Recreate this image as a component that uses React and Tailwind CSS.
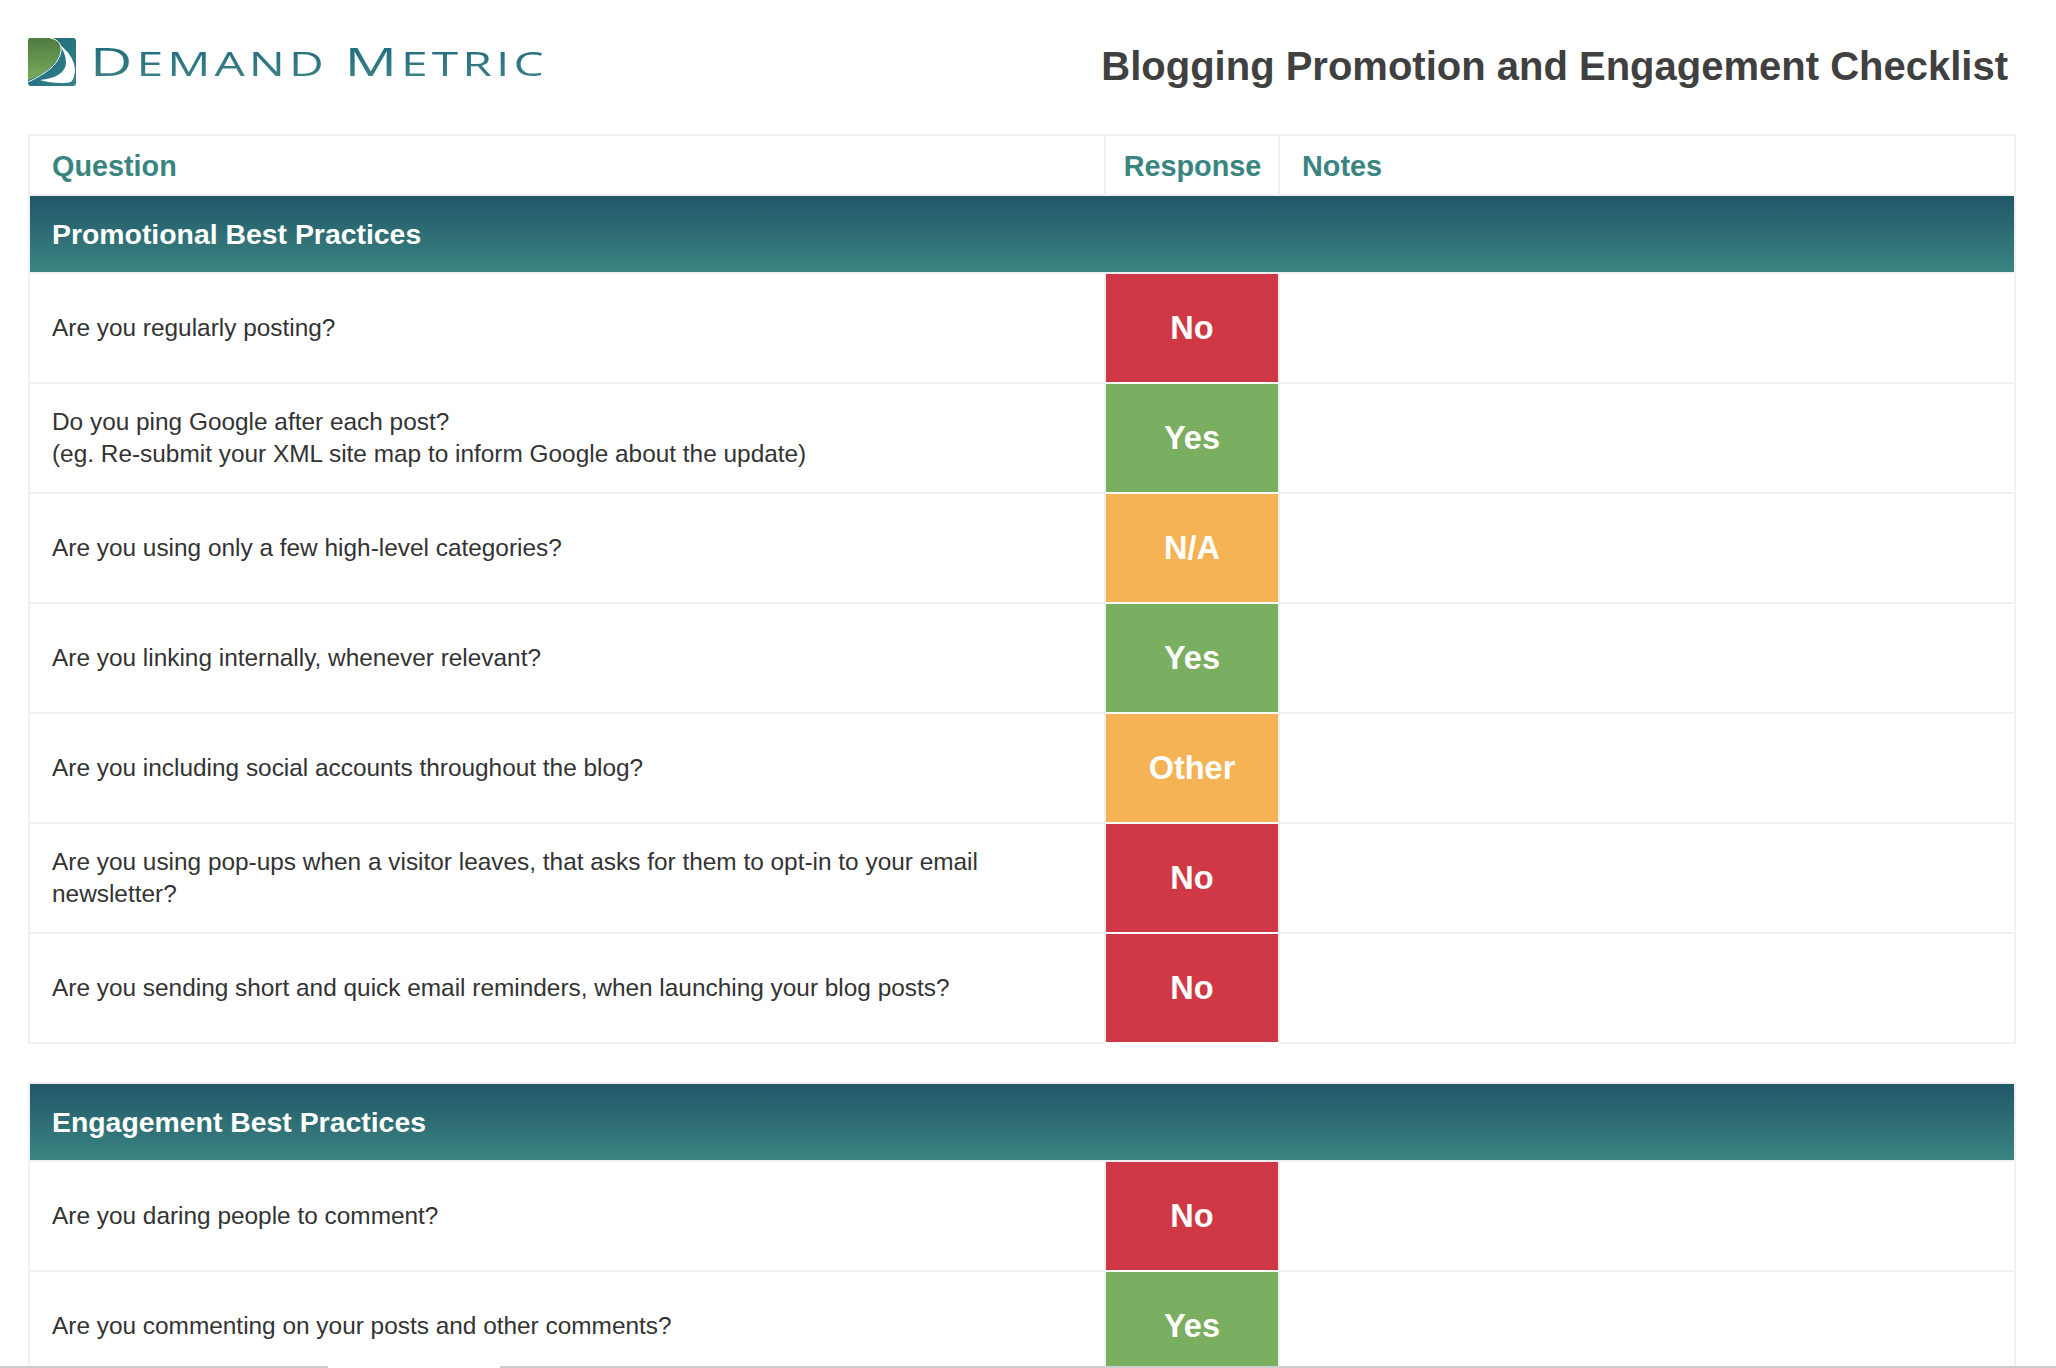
import React from 'react';

const sections = [
  {
    title: 'Promotional Best Practices',
    rows: [
      { q: ['Are you regularly posting?'], r: 'No' },
      { q: ['Do you ping Google after each post?', '(eg. Re-submit your XML site map to inform Google about the update)'], r: 'Yes' },
      { q: ['Are you using only a few high-level categories?'], r: 'N/A' },
      { q: ['Are you linking internally, whenever relevant?'], r: 'Yes' },
      { q: ['Are you including social accounts throughout the blog?'], r: 'Other' },
      { q: ['Are you using pop-ups when a visitor leaves, that asks for them to opt-in to your email newsletter?'], r: 'No' },
      { q: ['Are you sending short and quick email reminders, when launching your blog posts?'], r: 'No' },
    ],
  },
  {
    title: 'Engagement Best Practices',
    rows: [
      { q: ['Are you daring people to comment?'], r: 'No' },
      { q: ['Are you commenting on your posts and other comments?'], r: 'Yes' },
    ],
  },
];

const responseColors = {
  No: 'bg-[#cf3844]',
  Yes: 'bg-[#7aae60]',
  'N/A': 'bg-[#f6b355]',
  Other: 'bg-[#f6b355]',
};

const Logo = () => (
  <svg width="48" height="48" viewBox="0 0 48 48" className="shrink-0">
    <defs>
      <linearGradient id="logoGreen" x1="0" y1="0" x2="0" y2="1">
        <stop offset="0" stopColor="#4f7c42" />
        <stop offset="1" stopColor="#78ad5c" />
      </linearGradient>
      <linearGradient id="logoTeal" x1="0" y1="0" x2="1" y2="1">
        <stop offset="0" stopColor="#1b6478" />
        <stop offset="1" stopColor="#34848a" />
      </linearGradient>
    </defs>
    <rect width="48" height="48" rx="3" fill="url(#logoTeal)" />
    <path d="M0 3a3 3 0 0 1 3-3h22c4 1 7 4 8 8 0 8-4 15-10 21-6 5-14 10-23 13z" fill="url(#logoGreen)" />
    <path d="M32 7c8 6 14 14 15 24 0 5-1 10-4 13-8 2-22 1-31-2 7-1 13-2 18-5 5-3 8-8 8-12 0-7-3-13-6-18z" fill="#fff" />
    <path d="M22 0c6 1 10 4 11 9 1 7-4 16-10 21-6 5-14 10-23 14" fill="none" stroke="#fff" strokeWidth="1" />
  </svg>
);

const SectionHeader = ({ title }) => (
  <div className="flex h-[76px] items-center bg-linear-to-b/srgb from-[#215768] to-[#3b8481] pl-[22px] text-[28.4px] font-bold text-white">
    {title}
  </div>
);

const Row = ({ row }) => (
  <div className="flex h-[110px]">
    <div className="flex w-[1076px] items-center border-r-2 border-b-2 border-[#f0f0f0] pb-[1px] pl-[22px] pr-[70px] text-[24.4px] leading-[32px] text-[#333]">
      <div>
        {row.q.map((line) => (
          <div key={line}>{line}</div>
        ))}
      </div>
    </div>
    <div className={`flex w-[172px] items-center justify-center border-b-2 border-white bg-clip-padding pt-[1px] text-[32.5px] font-bold text-white ${responseColors[row.r]}`}>
      {row.r}
    </div>
    <div className="flex-1 border-b-2 border-l-2 border-[#f0f0f0]" />
  </div>
);

export default function App() {
  return (
    <div className="relative h-[1368px] overflow-hidden bg-white font-['Liberation_Sans',Arial,sans-serif]">
      {/* Header */}
      <div className="flex h-[134px] items-start justify-between pl-[28px] pr-[48px]">
        <div className="mt-[38px] flex items-start gap-[14px]">
          <Logo />
          <div className="mt-[4px] origin-left scale-x-[1.5] whitespace-nowrap bg-linear-to-b/srgb from-[#1f6a7c] to-[#3f8488] bg-clip-text font-['Open_Sans',sans-serif] text-[32px] leading-[38px] font-normal tracking-[2.7px] text-transparent">
            <span className="text-[39px]">D</span>EMAND <span className="text-[39px]">M</span>ETRIC
          </div>
        </div>
        <h1 className="mt-[41px] text-[40px] font-bold leading-[50px] text-[#404040]">
          Blogging Promotion and Engagement Checklist
        </h1>
      </div>

      {/* Table */}
      <div className="mx-[28px] w-[1988px] border-x-2 border-t-2 border-[#f0f0f0]">
        <div className="flex h-[60px] border-b-2 border-[#f0f0f0] text-[28.8px] font-bold text-[#3a8580]">
          <div className="flex w-[1074px] items-center pl-[22px] pt-[4px]">Question</div>
          <div className="flex w-[176px] items-center justify-center border-x-2 border-[#f0f0f0] pl-[1px] pt-[4px]">Response</div>
          <div className="flex items-center pl-[22px] pt-[4px]">Notes</div>
        </div>
        <SectionHeader title={sections[0].title} />
        <div className="h-[2px] bg-[#f0f0f0]" />
        {sections[0].rows.map((row) => (
          <Row key={row.q[0]} row={row} />
        ))}
      </div>

      <div className="mx-[28px] mt-[38px] w-[1988px] border-x-2 border-t-2 border-[#f0f0f0]">
        <SectionHeader title={sections[1].title} />
        <div className="h-[2px] bg-[#f0f0f0]" />
        {sections[1].rows.map((row) => (
          <Row key={row.q[0]} row={row} />
        ))}
      </div>

      {/* Bottom edge */}
      <div className="absolute bottom-0 left-0 h-[2px] w-[328px] bg-[#cccccc]" />
      <div className="absolute bottom-0 left-[500px] right-0 h-[2px] bg-[#cccccc]" />
    </div>
  );
}
